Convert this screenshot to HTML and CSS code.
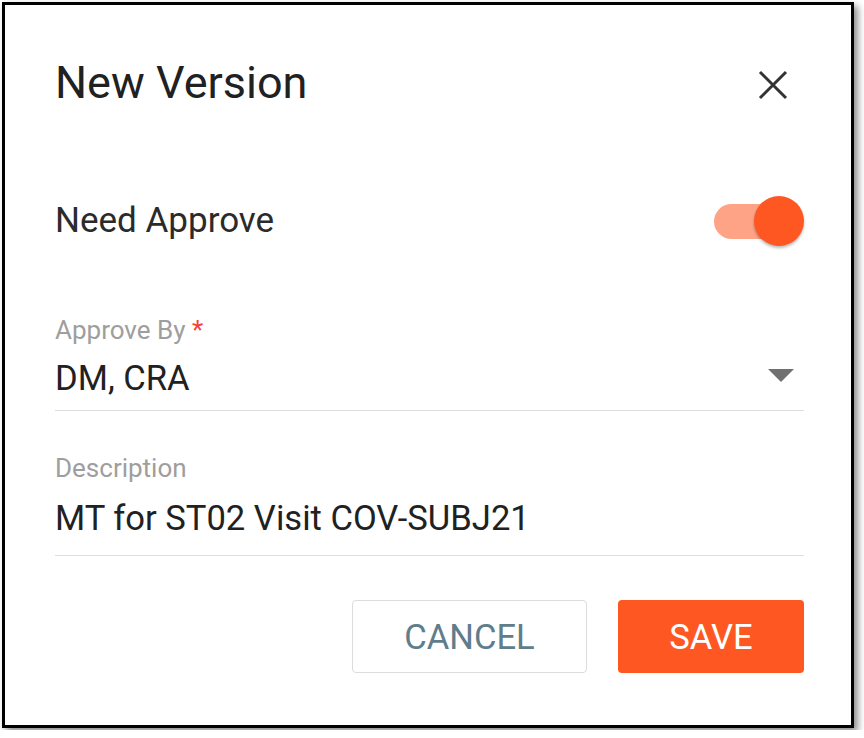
FILE: index.html
```html
<!DOCTYPE html>
<html lang="en">
<head>
<meta charset="utf-8">
<title>New Version</title>
<link rel="stylesheet" href="styles.css">
</head>
<body>
<div class="dialog">
  <div class="header">
    <h1 class="title">New Version</h1>
    <button class="close" aria-label="Close">
      <svg width="30" height="30" viewBox="0 0 30 30"><path d="M2 2 L28 28 M28 2 L2 28" stroke="#333" stroke-width="3" fill="none"/></svg>
    </button>
  </div>
  <div class="toggle-row">
    <span class="toggle-label">Need Approve</span>
    <span class="switch"><span class="track"></span><span class="thumb"></span></span>
  </div>
  <div class="field field-select">
    <div class="label">Approve By <span class="req">*</span></div>
    <div class="value-row">
      <span class="value">DM, CRA</span>
      <span class="arrow"></span>
    </div>
  </div>
  <div class="field field-desc">
    <div class="label">Description</div>
    <div class="value-row">
      <span class="value">MT for ST02 Visit COV-SUBJ21</span>
    </div>
  </div>
  <div class="actions">
    <button class="btn btn-cancel">CANCEL</button>
    <button class="btn btn-save">SAVE</button>
  </div>
</div>
</body>
</html>
```
FILE: styles.css
```css
html, body {
  margin: 0;
  padding: 0;
  background: #fff;
}
body {
  font-family: Roboto, "Liberation Sans", sans-serif;
}
.dialog {
  margin: 2px;
  width: 852px;
  height: 726px;
  box-sizing: border-box;
  border: 3px solid #000;
  background: #fff;
  box-shadow: 4px 4px 7px rgba(0, 0, 0, 0.45);
  padding: 52px 47px 0 50px;
}
.header {
  display: flex;
  justify-content: space-between;
  align-items: flex-start;
  height: 52px;
}
.title {
  margin: 0;
  font-size: 45px;
  line-height: 52px;
  font-weight: 400;
  color: #212121;
}
.close {
  margin: 13px 16px 0 0;
  padding: 0;
  border: none;
  background: none;
  width: 30px;
  height: 30px;
  display: block;
}
.close svg {
  display: block;
}
.toggle-row {
  margin-top: 87px;
  height: 50px;
  display: flex;
  justify-content: space-between;
  align-items: center;
}
.toggle-label {
  font-size: 35px;
  line-height: 40px;
  color: #2b2b2b;
}
.switch {
  position: relative;
  width: 90px;
  height: 50px;
  display: block;
}
.track {
  position: absolute;
  left: 0;
  top: 7.5px;
  width: 83px;
  height: 35px;
  border-radius: 17.5px;
  background: #ffa386;
}
.thumb {
  position: absolute;
  right: 0;
  top: 0;
  width: 50px;
  height: 50px;
  border-radius: 50%;
  background: #ff5722;
  box-shadow: 0 2px 3px rgba(0, 0, 0, 0.28);
}
.field {
  border-bottom: 1px solid #dedede;
}
.field-select {
  margin-top: 69px;
  padding-bottom: 12px;
}
.field-desc {
  margin-top: 42px;
  padding-bottom: 17px;
}
.label {
  font-size: 26px;
  line-height: 30px;
  color: #9e9e9e;
}
.req {
  color: #f44336;
}
.value-row {
  display: flex;
  justify-content: space-between;
  align-items: center;
}
.field-select .value-row {
  margin-top: 13px;
}
.field-desc .value-row {
  margin-top: 15px;
}
.value {
  font-size: 34.6px;
  line-height: 40px;
  color: #212121;
}
.arrow {
  width: 0;
  height: 0;
  border-left: 13.5px solid transparent;
  border-right: 13.5px solid transparent;
  border-top: 13px solid #707070;
  margin-right: 10px;
  margin-bottom: 5px;
}
.actions {
  margin-top: 44px;
  display: flex;
  justify-content: flex-end;
  gap: 31px;
}
.btn {
  height: 73px;
  border-radius: 4px;
  font-family: Roboto, "Liberation Sans", sans-serif;
  font-size: 34.6px;
  font-weight: 400;
  padding: 0;
  cursor: pointer;
}
.btn-cancel {
  width: 235px;
  background: #fff;
  border: 1px solid #dcdcdc;
  color: #5f7d8b;
}
.btn-save {
  width: 186px;
  background: #ff5722;
  border: none;
  color: #fff;
}
```
